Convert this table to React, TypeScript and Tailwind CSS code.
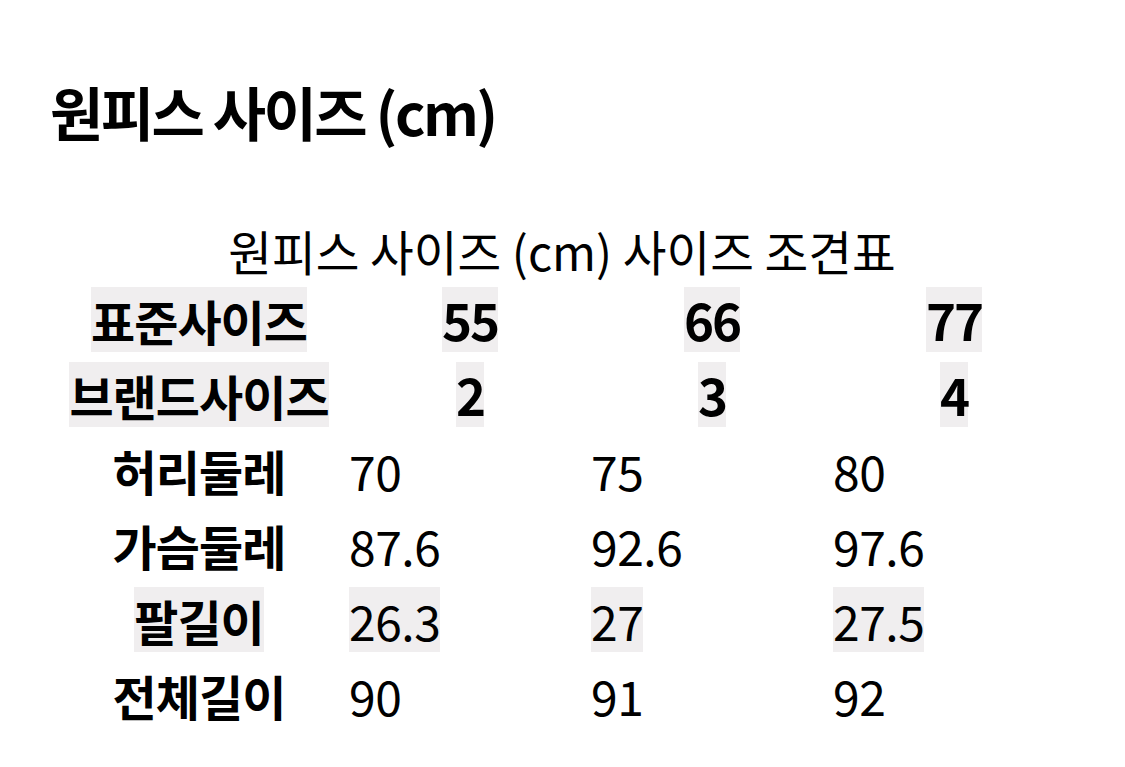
import React from "react";

const FONT = { fontFamily: '"Noto Sans CJK KR", "Noto Sans", sans-serif' };

type Row = { label: string; values: string[]; bold: boolean; labelHi?: boolean; valHi?: boolean };

const rows: Row[] = [
  { label: "표준사이즈", values: ["55", "66", "77"], bold: true, labelHi: true, valHi: true },
  { label: "브랜드사이즈", values: ["2", "3", "4"], bold: true, labelHi: true, valHi: true },
  { label: "허리둘레", values: ["70", "75", "80"], bold: false },
  { label: "가슴둘레", values: ["87.6", "92.6", "97.6"], bold: false },
  { label: "팔길이", values: ["26.3", "27", "27.5"], bold: false, labelHi: true, valHi: true },
  { label: "전체길이", values: ["90", "91", "92"], bold: false },
];

export default function App() {
  return (
    <div className="w-[1125px] h-[767px] bg-white text-black overflow-hidden" style={FONT}>
      <div className="pt-[82px] pl-[50px]">
        <h1 className="text-[58px] leading-[58px] font-bold tracking-[-0.045em] whitespace-nowrap">
          원피스 사이즈 (cm)
        </h1>
      </div>
      <div className="ml-[49px] w-[1026px]">
        <div className="mt-[88px] h-[46px] text-center text-[47.5px] leading-[46px] font-normal whitespace-nowrap">
          원피스 사이즈 (cm) 사이즈 조견표
        </div>
        <div className="mt-[8px] flex flex-col">
          {rows.map((r) => (
            <div key={r.label} className="grid grid-cols-[300px_242px_242px_242px] h-[75px] items-center">
              <div className="flex justify-center">
                <span
                  className={`h-[65px] flex items-center text-[48px] leading-none font-bold tracking-[-0.02em] whitespace-nowrap ${
                    r.labelHi ? "bg-[#f0eeef]" : ""
                  }`}
                >
                  {r.label}
                </span>
              </div>
              {r.values.map((v, i) => (
                <div key={i} className={`flex ${r.bold ? "justify-center" : "justify-start"}`}>
                  <span
                    className={`h-[65px] flex items-center leading-none whitespace-nowrap ${
                      r.bold ? "text-[51px] font-bold tracking-[-0.04em]" : "text-[48px] font-normal tracking-[-0.01em]"
                    } ${r.valHi ? "bg-[#f0eeef]" : ""}`}
                  >
                    {v}
                  </span>
                </div>
              ))}
            </div>
          ))}
        </div>
      </div>
    </div>
  );
}
